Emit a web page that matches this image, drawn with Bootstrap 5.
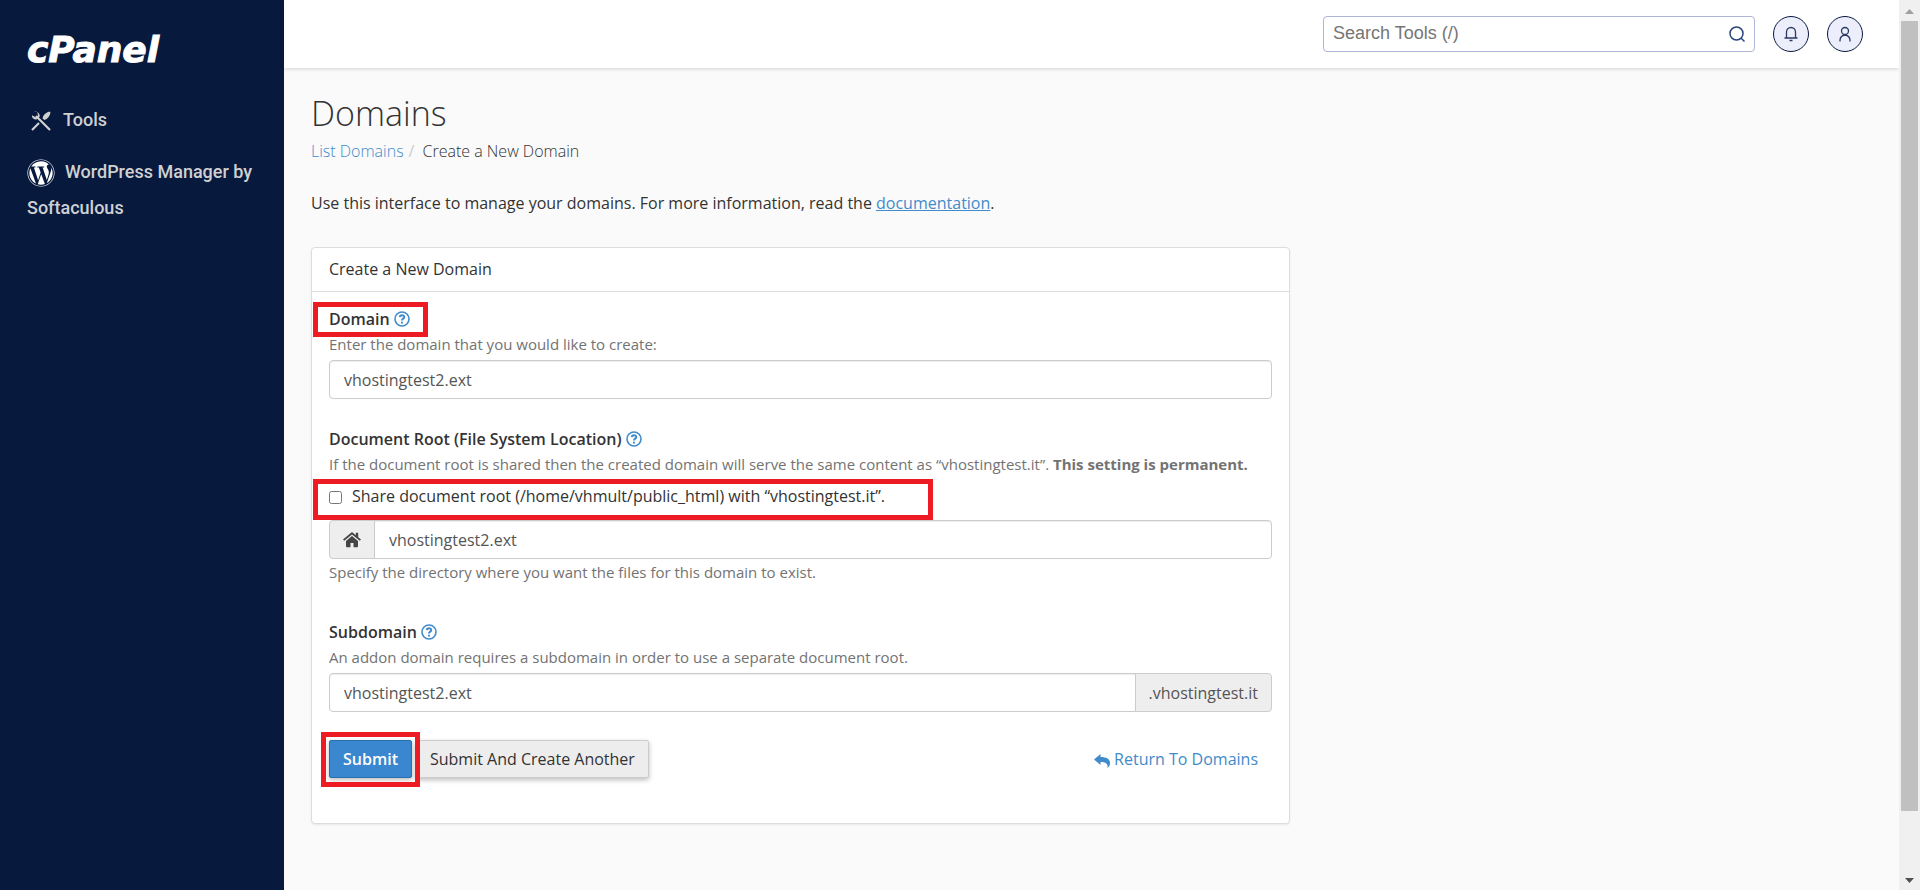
<!DOCTYPE html>
<html lang="en">
<head>
<meta charset="utf-8">
<meta name="viewport" content="width=device-width, initial-scale=1">
<title>Domains - cPanel</title>
<link href="https://cdn.jsdelivr.net/npm/bootstrap@5.3.0/dist/css/bootstrap.min.css" rel="stylesheet">
<style>
body{font-family:"Open Sans",sans-serif;font-size:16px;line-height:24px;color:#333;background:#fafafa}
a{color:#428bca}
.sidebar{width:284px;flex:none;background:#08193e;padding:30px 27px 0}
.brand{font-family:"DejaVu Sans",sans-serif;font-weight:700;font-style:italic;font-size:36px;line-height:40px;color:#fff;-webkit-text-stroke:1px #fff;text-decoration:none;margin-bottom:32px}
.side-link{display:block;font-family:Roboto,sans-serif;font-weight:500;font-size:18px;line-height:36px;color:#cfd0d1;text-decoration:none}
.side-link svg{vertical-align:middle;margin-right:10px}
.side-link .tool-icon{margin:0 12px 0 4px}
.topbar{height:68px;background:#fff;box-shadow:0 1px 4px rgba(0,0,0,.16);padding-right:36px;gap:18px}
.search-box{width:432px;height:36px;border:1px solid #aeb5d6;border-radius:4px;background:#fff;padding-right:9px}
.search-box input{font-family:"Liberation Sans",sans-serif;font-size:18px;line-height:24px;color:#333;padding:0 9px 2px}
.search-box input::placeholder{color:#757575}
.round-btn{width:36px;height:36px;border:1px solid #08193e;border-radius:50%;background:#eceefc;color:#293a5e;padding:0}
.page-body{padding:24px 27px 0}
h1{font-weight:300;font-size:34px;line-height:42px;margin:0 0 5px}
.crumbs{font-weight:300;margin-bottom:28px}
.crumbs .breadcrumb-item+.breadcrumb-item::before{color:#ccc;padding-right:8px;font-weight:400}
.crumbs .breadcrumb-item+.breadcrumb-item{padding-left:5px;color:#333}
.crumbs a{text-decoration:none}
.panel{max-width:979px;border:1px solid #ddd;border-radius:4px;box-shadow:0 1px 2px rgba(0,0,0,.08);background:#fff;color:#333}
.panel .card-header{background:#fff;border-color:#ddd;padding:9px 17px 10px}
.panel .card-body{padding:15px 17px 45px}
.field-name{font-weight:600;line-height:24px}
.hint{font-size:15px;line-height:24px;margin-top:1px;color:#737373}
.form-control,.input-group-text{font-size:16px;line-height:24px;height:39px;padding:6px 14px;border-color:#ccc;border-radius:4px;color:#555}
.form-control{box-shadow:inset 0 1px 1px rgba(0,0,0,.075)}
.input-group-text{background:#eee;padding:6px 13px}
.field{margin-bottom:28px}
.field-tall{margin-bottom:36px}
.help-btn{border:0;background:none;padding:0;color:#428bca;line-height:16px;vertical-align:-2px}
.help-btn svg,.round-btn svg{display:block}
.round-btn svg{margin:auto}
.marked{position:relative}
.marked::after{content:"";position:absolute;inset:var(--t) var(--r) var(--b) var(--l);border:5px solid #ed1c24;pointer-events:none;z-index:6}
.mark-name{--t:-5px;--r:-18px;--b:-6px;--l:-16px}
.mark-share{--t:-5px;--r:-48px;--b:-12px;--l:-16px}
.mark-submit{--t:-8px;--r:-8px;--b:-9px;--l:-8px}
.share-row{margin:8px 0 12px}
.share-row input{width:13px;height:13px;margin:0 10px 0 0;vertical-align:-2px}
.btn-cp{font-size:16px;line-height:24px;padding:6px 13px;border-radius:2px;border:1px solid #ccc;background:#ededed;color:#333;box-shadow:0 2px 5px rgba(0,0,0,.26)}
.btn-cp.go{background:#3a87cf;border-color:#2b6eae;color:#fff;font-weight:600}
.return-link{padding-right:14px}
.rail{width:21px;flex:none;background:#f0f0f0}
.rail-thumb{background:#c0c0c0;width:17px;margin:auto;flex:790 0 0}
.rail-gap{flex:60 0 0}
</style>
</head>
<body>
<div class="d-flex min-vh-100">
  <nav class="sidebar" aria-label="Main">
    <a class="brand d-block" href="#">cPanel</a>
    <a class="side-link mb-3" href="#"><svg class="tool-icon" width="20" height="20" viewBox="0 0 20 20" fill="none" stroke="currentColor" stroke-width="2.200"><path d="M5 5l14 14M1 19l7-7"/><path d="M3 .6l3.200.4.900 3.400L4.600 6.300 1 4.200c-.4 3 2 5 4.800 4l3-2.700C9 2.500 6.200-.4 3 .6z" fill="currentColor" stroke="none"/><path d="M11.500 7.500C12 4 15 1.300 18.500.5l1 1c-.5 3.500-3 6.500-6 7.500z" fill="currentColor" stroke="none"/></svg>Tools</a>
    <a class="side-link" href="#"><svg width="28" height="28" viewBox="0 0 512 512" fill="#fff"><path d="M61.700 169.400l101.500 278C92.200 413 43.300 340.200 43.300 256c0-30.900 6.600-60.100 18.400-86.600zm337.900 75.900c0-26.300-9.400-44.500-17.500-58.700-10.800-17.500-20.900-32.400-20.900-49.900 0-19.600 14.800-37.800 35.700-37.800.9 0 1.800.1 2.800.2-37.900-34.700-88.300-55.900-143.700-55.900-74.300 0-139.700 38.100-177.800 95.900 5 .2 9.700.3 13.700.3 22.200 0 56.700-2.700 56.700-2.700 11.500-.7 12.800 16.200 1.400 17.500 0 0-11.500 1.300-24.300 2l77.500 230.400L249.800 247l-33.100-90.800c-11.500-.7-22.300-2-22.300-2-11.500-.7-10.100-18.200 1.300-17.500 0 0 35.100 2.700 56 2.700 22.200 0 56.700-2.700 56.700-2.700 11.500-.7 12.800 16.200 1.400 17.500 0 0-11.500 1.300-24.300 2l76.900 228.700 21.200-70.900c9-29.400 16-50.500 16-68.700zm-139.900 29.300l-63.800 185.500c19.100 5.600 39.200 8.700 60.100 8.700 24.800 0 48.500-4.300 70.600-12.100-.6-.9-1.100-1.900-1.500-2.900l-65.400-179.200zm183-120.700c.9 6.800 1.400 14 1.400 21.900 0 21.600-4 45.800-16.200 76.200l-65 187.900C426.200 403 468.700 334.500 468.700 256c0-37-9.400-71.800-26-102.100zM504 256c0 136.800-111.300 248-248 248C119.200 504 8 392.700 8 256 8 119.200 119.200 8 256 8c136.700 0 248 111.200 248 248zm-11.400 0c0-130.500-106.200-236.600-236.600-236.600C125.500 19.400 19.400 125.500 19.400 256S125.600 492.600 256 492.600c130.500 0 236.600-106.100 236.600-236.600z"/></svg>WordPress Manager by Softaculous</a>
  </nav>
  <div class="flex-grow-1">
    <header class="topbar d-flex align-items-center justify-content-end">
      <form class="search-box d-flex align-items-center" role="search">
        <input class="flex-grow-1 border-0 bg-transparent" type="text" placeholder="Search Tools (/)" aria-label="Search Tools">
        <svg width="16" height="16" viewBox="0 0 16 16" fill="none" stroke="#2b4580" stroke-width="1.500"><circle cx="7.500" cy="7.500" r="6.500"/><path d="M12 12l3.500 3.500"/></svg>
      </form>
      <button class="round-btn" type="button" aria-label="Notifications"><svg width="14" height="16" viewBox="0 0 14 16" fill="none" stroke="currentColor" stroke-width="1.300"><path d="M2.500 12V6a4.500 4.500 0 0 1 9 0v6M.5 12h13M5.500 14.500h3"/></svg></button>
      <button class="round-btn" type="button" aria-label="Account"><svg width="14" height="16" viewBox="0 0 14 16" fill="none" stroke="currentColor" stroke-width="1.300"><circle cx="7" cy="5" r="3.500"/><path d="M2 15.500v-1c0-3 2-5 5-5.500 3 .5 5 2.500 5 5.500v1"/></svg></button>
    </header>
    <main class="page-body">
      <h1>Domains</h1>
      <nav aria-label="breadcrumb"><ol class="breadcrumb crumbs">
        <li class="breadcrumb-item"><a href="#">List Domains</a></li>
        <li class="breadcrumb-item" aria-current="page">Create a New Domain</li>
      </ol></nav>
      <p class="mb-0 pb-4">Use this interface to manage your domains. For more information, read the <a href="#">documentation</a>.</p>
      <section class="card panel mt-2">
        <div class="card-header">Create a New Domain</div>
        <form class="card-body">
          <div class="field">
            <div class="d-flex"><div class="marked mark-name"><label class="field-name" for="domain">Domain</label>
              <button class="help-btn" type="button" aria-label="About the domain"><svg width="16" height="16" viewBox="0 0 16 16" fill="none" stroke="currentColor" stroke-width="1.600"><circle cx="8" cy="8" r="7"/><path stroke-width="2" d="M5.800 6.200c.2-2.600 4.500-2.400 4.400 0C10.200 7.700 8 7.600 8 9.500M8 10.800v1.700"/></svg></button></div></div>
            <div class="hint mb-1">Enter the domain that you would like to create:</div>
            <input class="form-control" id="domain" type="text" value="vhostingtest2.ext">
          </div>
          <div class="field-tall">
            <label class="field-name" for="root">Document Root (File System Location)</label>
            <button class="help-btn" type="button" aria-label="About the document root"><svg width="16" height="16" viewBox="0 0 16 16" fill="none" stroke="currentColor" stroke-width="1.600"><circle cx="8" cy="8" r="7"/><path stroke-width="2" d="M5.800 6.200c.2-2.600 4.500-2.400 4.400 0C10.200 7.700 8 7.600 8 9.500M8 10.800v1.700"/></svg></button>
            <div class="hint">If the document root is shared then the created domain will serve the same content as “vhostingtest.it”. <strong>This setting is permanent.</strong></div>
            <div class="d-flex share-row"><label class="marked mark-share"><input type="checkbox">Share document root (/home/vhmult/public_html) with “vhostingtest.it”.</label></div>
            <div class="input-group">
              <span class="input-group-text"><svg width="18" height="16" viewBox="0 0 18 16" fill="#444"><path d="M9 4l6 5v5.500a.8.8 0 0 1-.8.800h-3.700v-4.300h-3v4.300H3.800a.8.8 0 0 1-.8-.8V9z"/><path d="M9 0L0 7.500l1.200 1.300L9 2.400l7.800 6.400L18 7.500l-2.800-2.300V.8h-2.400v2.400z"/></svg></span>
              <input class="form-control" id="root" type="text" value="vhostingtest2.ext">
            </div>
            <div class="hint">Specify the directory where you want the files for this domain to exist.</div>
          </div>
          <div class="field">
            <label class="field-name" for="sub">Subdomain</label>
            <button class="help-btn" type="button" aria-label="About the subdomain"><svg width="16" height="16" viewBox="0 0 16 16" fill="none" stroke="currentColor" stroke-width="1.600"><circle cx="8" cy="8" r="7"/><path stroke-width="2" d="M5.800 6.200c.2-2.600 4.500-2.400 4.400 0C10.200 7.700 8 7.600 8 9.500M8 10.800v1.700"/></svg></button>
            <div class="hint mb-1">An addon domain requires a subdomain in order to use a separate document root.</div>
            <div class="input-group">
              <input class="form-control" id="sub" type="text" value="vhostingtest2.ext">
              <span class="input-group-text">.vhostingtest.it</span>
            </div>
          </div>
          <div class="d-flex align-items-center">
            <span class="marked mark-submit me-1"><button class="btn-cp go" type="button">Submit</button></span>
            <button class="btn-cp" type="button">Submit And Create Another</button>
            <a class="return-link ms-auto text-decoration-none" href="#"><svg width="16" height="14" viewBox="0 0 16 14" fill="currentColor" class="me-1"><path d="M0 5.500L6.500 0v3c6 0 9.500 2 9.500 6 0 2-.7 3.600-2.500 5 .8-4-1.500-6-7-6v3z"/></svg>Return To Domains</a>
          </div>
        </form>
      </section>
    </main>
  </div>
  <div class="rail d-flex flex-column align-items-center" aria-hidden="true">
    <svg width="21" height="21" viewBox="0 0 21 21"><path d="M6 14l4.500-5 4.500 5z" fill="#a0a0a0"/></svg>
    <div class="rail-thumb"></div>
    <div class="rail-gap"></div>
    <svg width="21" height="19" viewBox="0 0 21 19"><path d="M6 7h9l-4.500 5z" fill="#505050"/></svg>
  </div>
</div>
<script src="https://cdn.jsdelivr.net/npm/bootstrap@5.3.0/dist/js/bootstrap.bundle.min.js"></script>
</body>
</html>
